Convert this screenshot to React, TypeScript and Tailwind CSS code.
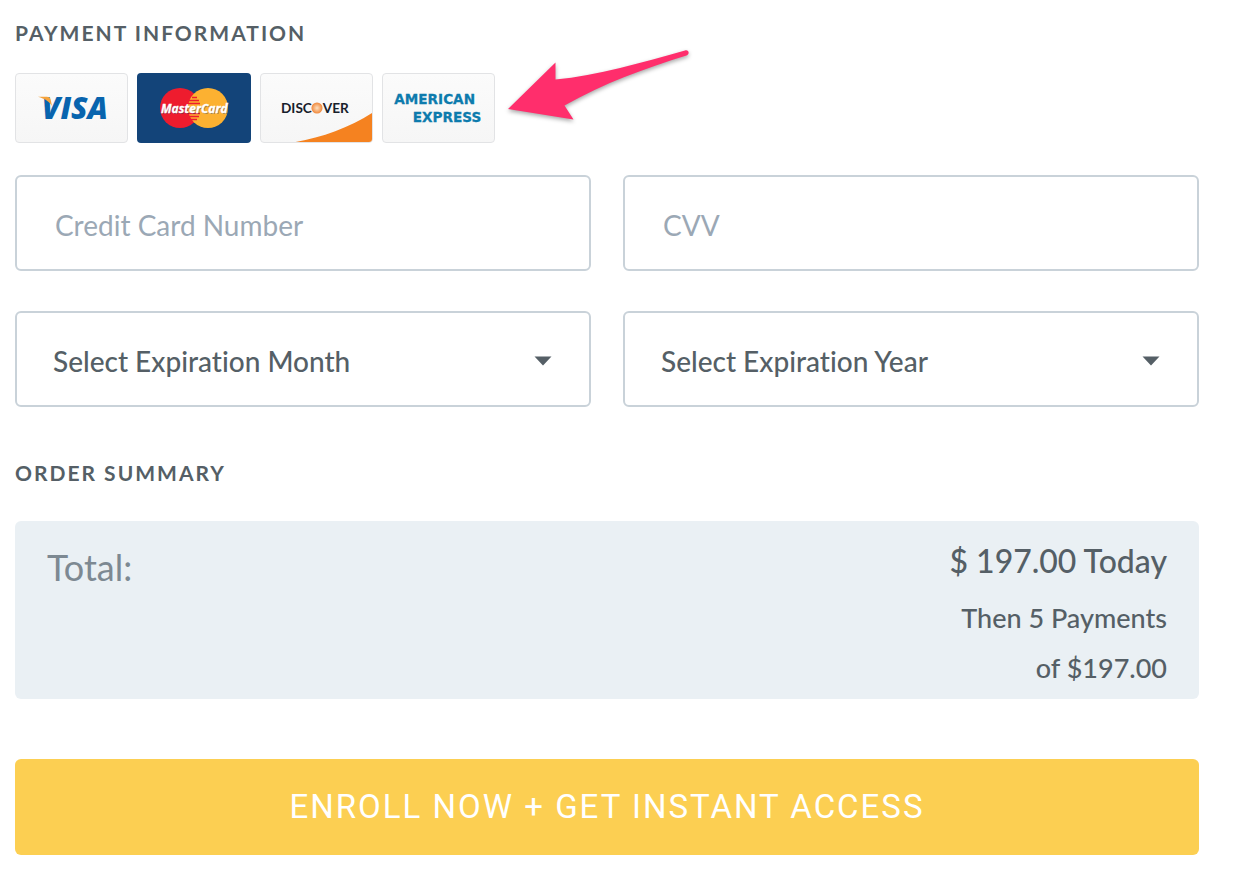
import { useState } from "react";

const MONTHS = ["01", "02", "03", "04", "05", "06", "07", "08", "09", "10", "11", "12"];
const YEARS = ["2024", "2025", "2026", "2027", "2028", "2029", "2030"];

const Visa = () => (
  <svg viewBox="0 0 113 70" className="h-full w-full" role="img" aria-label="Visa">
    <text x="26" y="46" fontFamily="Open Sans, sans-serif" fontSize="31" fontWeight="800" fontStyle="italic" fill="#0864ae">
      VISA
    </text>
    <path d="M22 23.500h9c2.500 0 3.700 1 4.200 3.500l1.200 6C34 28.500 29 25.500 22 23.500z" fill="#f5a33c" />
  </svg>
);

const MasterCard = () => (
  <svg viewBox="0 0 114 70" className="h-full w-full" role="img" aria-label="MasterCard">
    <circle cx="43" cy="35" r="20" fill="#ee1c2e" />
    <circle cx="71" cy="35" r="20" fill="#fcb131" />
    <path
      d="M55 24.500h5M52 27.500h10M51 30.500h12M51 40.500h12M52 43.500h10M54 46.500h6"
      stroke="#ee1c2e"
      strokeWidth="1.500"
    />
    <text x="25" y="41" fontFamily="Open Sans, sans-serif" fontSize="12" fontWeight="700" fontStyle="italic" fill="#1a2c50" opacity="0.4">
      MasterCard
    </text>
    <text x="24" y="40" fontFamily="Open Sans, sans-serif" fontSize="12" fontWeight="700" fontStyle="italic" fill="#fff" stroke="#fff" strokeWidth="0.300">
      MasterCard
    </text>
  </svg>
);

const Discover = () => (
  <svg viewBox="0 0 113 70" className="h-full w-full" role="img" aria-label="Discover">
    <defs>
      <radialGradient id="discover-o">
        <stop offset="0" stopColor="#fde0c0" />
        <stop offset="1" stopColor="#f0873a" />
      </radialGradient>
    </defs>
    <path d="M35 70C62 65.500 91 55 114 40v31H35z" fill="#f58220" />
    <g fontFamily="Lato, sans-serif" fontSize="14" fontWeight="700" fill="#17202b">
      <text x="20" y="40">DISC</text>
      <text x="63" y="40">VER</text>
    </g>
    <circle cx="57" cy="35" r="5.700" fill="url(#discover-o)" />
  </svg>
);

const Amex = () => (
  <svg viewBox="0 0 113 70" className="h-full w-full" role="img" aria-label="American Express">
    <g
      fontFamily="DejaVu Sans, sans-serif"
      fontSize="14"
      fontWeight="700"
      fill="#0d7bad"
      stroke="#0d7bad"
      strokeWidth="0.300"
    >
      <text x="11" y="31">AMERICAN</text>
      <text x="30" y="49">EXPRESS</text>
    </g>
  </svg>
);

const Arrow = () => (
  <svg
    width="190"
    height="84"
    viewBox="0 0 190 84"
    className="absolute -top-7 left-full ml-2 drop-shadow-[0_2px_2px_rgba(0,0,0,0.35)]"
    aria-hidden="true"
  >
    <path
      d="M5 64L52.500 17.500V34.500C94 31 140 17 182 5.500C186 4.500 187 9 183.500 10.500C143 23 101 38 61.500 60.500L70.500 74.500z"
      fill="#ff2e6c"
    />
  </svg>
);

const cardClass =
  "h-[70px] w-[113px] overflow-hidden rounded border border-[#e2e3e5] bg-linear-to-b from-[#fbfbfb] to-[#f6f6f6]";

const fieldClass =
  "h-24 w-full rounded-md border-2 border-[#c9d2d9] bg-white text-[28px] text-[#555f66] focus:outline-none focus:border-[#8d9aa7]";

type SelectProps = {
  label: string;
  options: string[];
  value: string;
  onChange: (value: string) => void;
};

const SelectField = ({ label, options, value, onChange }: SelectProps) => (
  <div className="relative">
    <select
      aria-label={label}
      value={value}
      onChange={(e) => onChange(e.target.value)}
      className={`${fieldClass} appearance-none pl-9 pr-16 pt-1 font-medium`}
    >
      <option value="">{label}</option>
      {options.map((o) => (
        <option key={o} value={o}>
          {o}
        </option>
      ))}
    </select>
    <svg
      width="18"
      height="10"
      viewBox="0 0 18 10"
      className="pointer-events-none absolute right-[39px] top-[45px]"
      aria-hidden="true"
    >
      <path d="M0.500 0.500h17L9 9.500z" fill="#555f66" />
    </svg>
  </div>
);

const App = () => {
  const [number, setNumber] = useState("");
  const [cvv, setCvv] = useState("");
  const [month, setMonth] = useState("");
  const [year, setYear] = useState("");

  return (
    <div className="min-h-screen bg-white font-['Lato',sans-serif] text-[#555f66] [font-variant-ligatures:none]">
      <form onSubmit={(e) => e.preventDefault()} className="pb-5 pl-[15px] pr-[51px] pt-[19px]">
        <h2 className="text-[21px] font-bold leading-7 tracking-[2px]">PAYMENT INFORMATION</h2>

        <div className="relative mt-[26px] flex w-fit gap-[9px]">
          <div className={cardClass}>
            <Visa />
          </div>
          <div className="h-[70px] w-[114px] overflow-hidden rounded bg-[#134479]">
            <MasterCard />
          </div>
          <div className={cardClass}>
            <Discover />
          </div>
          <div className={cardClass}>
            <Amex />
          </div>
          <Arrow />
        </div>

        <div className="mt-8 grid grid-cols-2 gap-x-8 gap-y-10">
          <input
            type="text"
            aria-label="Credit Card Number"
            placeholder="Credit Card Number"
            value={number}
            onChange={(e) => setNumber(e.target.value)}
            className={`${fieldClass} pl-[38px] pr-8 pt-1 placeholder:text-[#9ba8b5]`}
          />
          <input
            type="text"
            aria-label="CVV"
            placeholder="CVV"
            value={cvv}
            onChange={(e) => setCvv(e.target.value)}
            className={`${fieldClass} pl-[38px] pr-8 pt-1 placeholder:text-[#9ba8b5]`}
          />
          <SelectField label="Select Expiration Month" options={MONTHS} value={month} onChange={setMonth} />
          <SelectField label="Select Expiration Year" options={YEARS} value={year} onChange={setYear} />
        </div>

        <h2 className="mt-[52px] text-[21px] font-bold leading-7 tracking-[2px]">ORDER SUMMARY</h2>

        <div className="mt-[34px] flex justify-between rounded-md bg-[#eaf0f4] px-8 pb-1.5 pt-4">
          <p className="pt-1.5 text-[36px] leading-12 text-[#7d8992]">Total:</p>
          <div className="text-right font-medium">
            <p className="text-[32px] leading-12">$ 197.00 Today</p>
            <p className="mt-2 text-[27px] leading-[50px]">Then 5 Payments</p>
            <p className="text-[27px] leading-[50px]">of $197.00</p>
          </div>
        </div>

        <button
          type="submit"
          className="mt-15 h-24 w-full cursor-pointer rounded-md bg-[#fccf52] font-['Roboto',sans-serif] text-[33px] tracking-[2px] text-white"
        >
          ENROLL NOW + GET INSTANT ACCESS
        </button>
      </form>
    </div>
  );
};

export default App;
